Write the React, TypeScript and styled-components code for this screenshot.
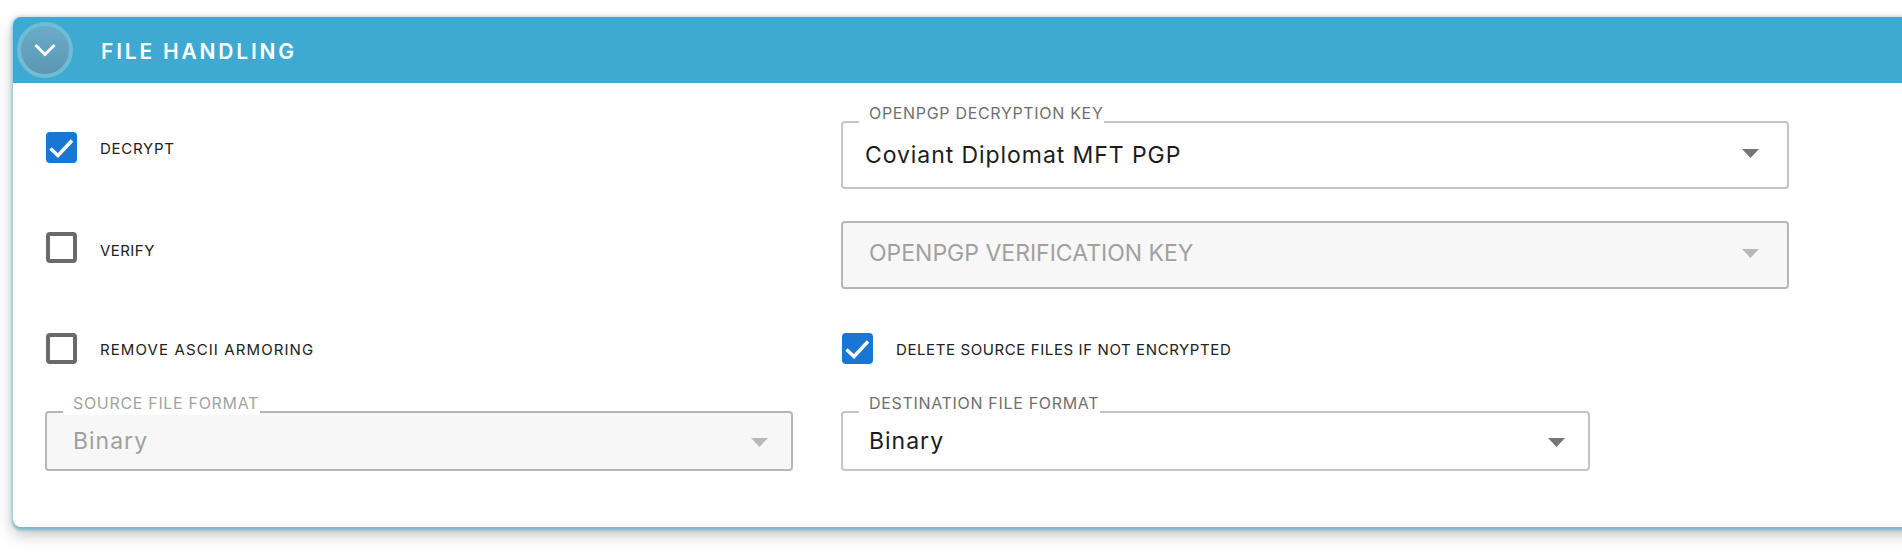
import React from 'react'
import styled, { createGlobalStyle } from 'styled-components'

const GlobalStyle = createGlobalStyle`
  html, body {
    margin: 0;
    height: 100%;
    overflow: hidden;
    background: #fff;
    font-family: Inter, "Open Sans", sans-serif;
  }
`

const Page = styled.div`
  padding: 17px 0 0 13px;
  width: 1950px;
`

const Card = styled.section`
  border-radius: 8px;
  background: #fff;
  box-shadow: 0 3px 3px #7ab7ce, -1px 0 4px #a9d3e3, 0 7px 16px rgba(0, 0, 0, 0.26);
  overflow: hidden;
`

const Header = styled.header`
  height: 66px;
  background: #3eaad1;
  display: flex;
  align-items: center;
  padding-left: 4px;
`

const Toggle = styled.button`
  width: 56px;
  height: 56px;
  box-sizing: border-box;
  padding: 0;
  border-radius: 50%;
  border: 4px solid #6fbcd9;
  background: linear-gradient(#6aacc8, #5d97b1);
  display: flex;
  align-items: center;
  justify-content: center;
`

const Title = styled.h2`
  margin: 2px 0 0 28px;
  font-size: 21px;
  font-weight: 600;
  letter-spacing: 2.8px;
  color: #fff;
`

const Body = styled.div`
  padding: 38px 0 56px 32px;
  display: grid;
  grid-template-columns: 748px 948px;
  column-gap: 48px;
  grid-template-rows: 68px 68px 58px 60px;
  row-gap: 32px;
`

const CheckRow = styled.label<{ $top?: number }>`
  display: flex;
  align-items: center;
  height: 31px;
  margin-top: ${p => p.$top ?? 0}px;
  margin-left: 1px;
`

const Box = styled.span<{ $checked?: boolean }>`
  width: 31px;
  height: 31px;
  flex: none;
  box-sizing: border-box;
  border-radius: 4px;
  border: ${p => (p.$checked ? 'none' : '4px solid #6a6a6a')};
  background: ${p => (p.$checked ? '#1976d2' : '#fff')};
  display: flex;
  align-items: center;
  justify-content: center;
`

const CheckLabel = styled.span<{ $spacing?: number; $drop?: number }>`
  margin: ${p => p.$drop ?? 2}px 0 0 23px;
  font-size: 15px;
  letter-spacing: ${p => p.$spacing ?? 0.85}px;
  color: #212121;
`

const Select = styled.div<{ $disabled?: boolean; $width?: number }>`
  position: relative;
  box-sizing: border-box;
  width: ${p => (p.$width ? `${p.$width}px` : '100%')};
  border: 2px solid ${p => (p.$disabled ? '#b6b6b6' : '#c4c4c4')};
  border-radius: 4px;
  background: ${p => (p.$disabled ? '#f7f7f7' : '#fff')};
  display: flex;
  align-items: center;
  justify-content: space-between;
  padding: 0 ${p => (p.$width ? 23 : 28)}px 0 26px;
`

const Legend = styled.span<{ $disabled?: boolean }>`
  position: absolute;
  left: 16px;
  top: -16px;
  height: 18px;
  line-height: 12px;
  padding: 0 1px 0 10px;
  background: #fff;
  font-size: 16px;
  letter-spacing: 0.68px;
  white-space: nowrap;
  color: ${p => (p.$disabled ? '#a3a3a3' : '#6f6f6f')};
`

const Value = styled.span<{ $disabled?: boolean; $spacing?: number; $shift?: number; $lift?: number }>`
  font-size: 23px;
  letter-spacing: ${p => p.$spacing ?? 1}px;
  margin-left: ${p => p.$shift ?? 0}px;
  margin-top: ${p => -(p.$lift ?? 0)}px;
  color: ${p => (p.$disabled ? '#a0a0a0' : '#1c1c1c')};
`

const Caret = styled.svg<{ $shift?: number }>`
  width: 17px;
  height: 9px;
  flex: none;
  margin-top: ${p => p.$shift ?? 0}px;
`

const Check = () => (
  <svg width="31" height="31" viewBox="0 0 31 31" fill="none" stroke="#fff" strokeWidth="3.4">
    <path d="M4.5 16.5 12 23.5 26 8.5" />
  </svg>
)

const Chevron = () => (
  <svg width="22" height="14" viewBox="0 0 22 14" fill="none" stroke="#fff" strokeWidth="3">
    <path d="M1.5 2 11 11.5 20.5 2" />
  </svg>
)

const Arrow = ({ color, shift }: { color: string; shift?: number }) => (
  <Caret viewBox="0 0 17 9" $shift={shift}>
    <path d="M0 0H17L8.5 9Z" fill={color} />
  </Caret>
)

const App = () => (
  <Page>
    <GlobalStyle />
    <Card>
      <Header>
        <Toggle aria-label="Collapse">
          <Chevron />
        </Toggle>
        <Title>FILE HANDLING</Title>
      </Header>
      <Body>
        <CheckRow $top={11}>
          <Box $checked><Check /></Box>
          <CheckLabel $spacing={0.75}>DECRYPT</CheckLabel>
        </CheckRow>
        <Select>
          <Legend>OPENPGP DECRYPTION KEY</Legend>
          <Value $shift={-4} $spacing={0.93}>Coviant Diplomat MFT PGP</Value>
          <Arrow color="#757575" shift={-3} />
        </Select>
        <CheckRow $top={11}>
          <Box />
          <CheckLabel $spacing={0.45} $drop={6}>VERIFY</CheckLabel>
        </CheckRow>
        <Select $disabled>
          <Value $disabled $spacing={0} $lift={4}>OPENPGP VERIFICATION KEY</Value>
          <Arrow color="#b8b8b8" shift={-3} />
        </Select>
        <CheckRow $top={12}>
          <Box />
          <CheckLabel $spacing={1.1}>REMOVE ASCII ARMORING</CheckLabel>
        </CheckRow>
        <CheckRow $top={12}>
          <Box $checked><Check /></Box>
          <CheckLabel $spacing={0.6}>DELETE SOURCE FILES IF NOT ENCRYPTED</CheckLabel>
        </CheckRow>
        <Select $disabled $width={748}>
          <Legend $disabled>SOURCE FILE FORMAT</Legend>
          <Value $disabled>Binary</Value>
          <Arrow color="#b8b8b8" shift={3} />
        </Select>
        <Select $width={749}>
          <Legend>DESTINATION FILE FORMAT</Legend>
          <Value>Binary</Value>
          <Arrow color="#757575" shift={3} />
        </Select>
      </Body>
    </Card>
  </Page>
)

export default App
